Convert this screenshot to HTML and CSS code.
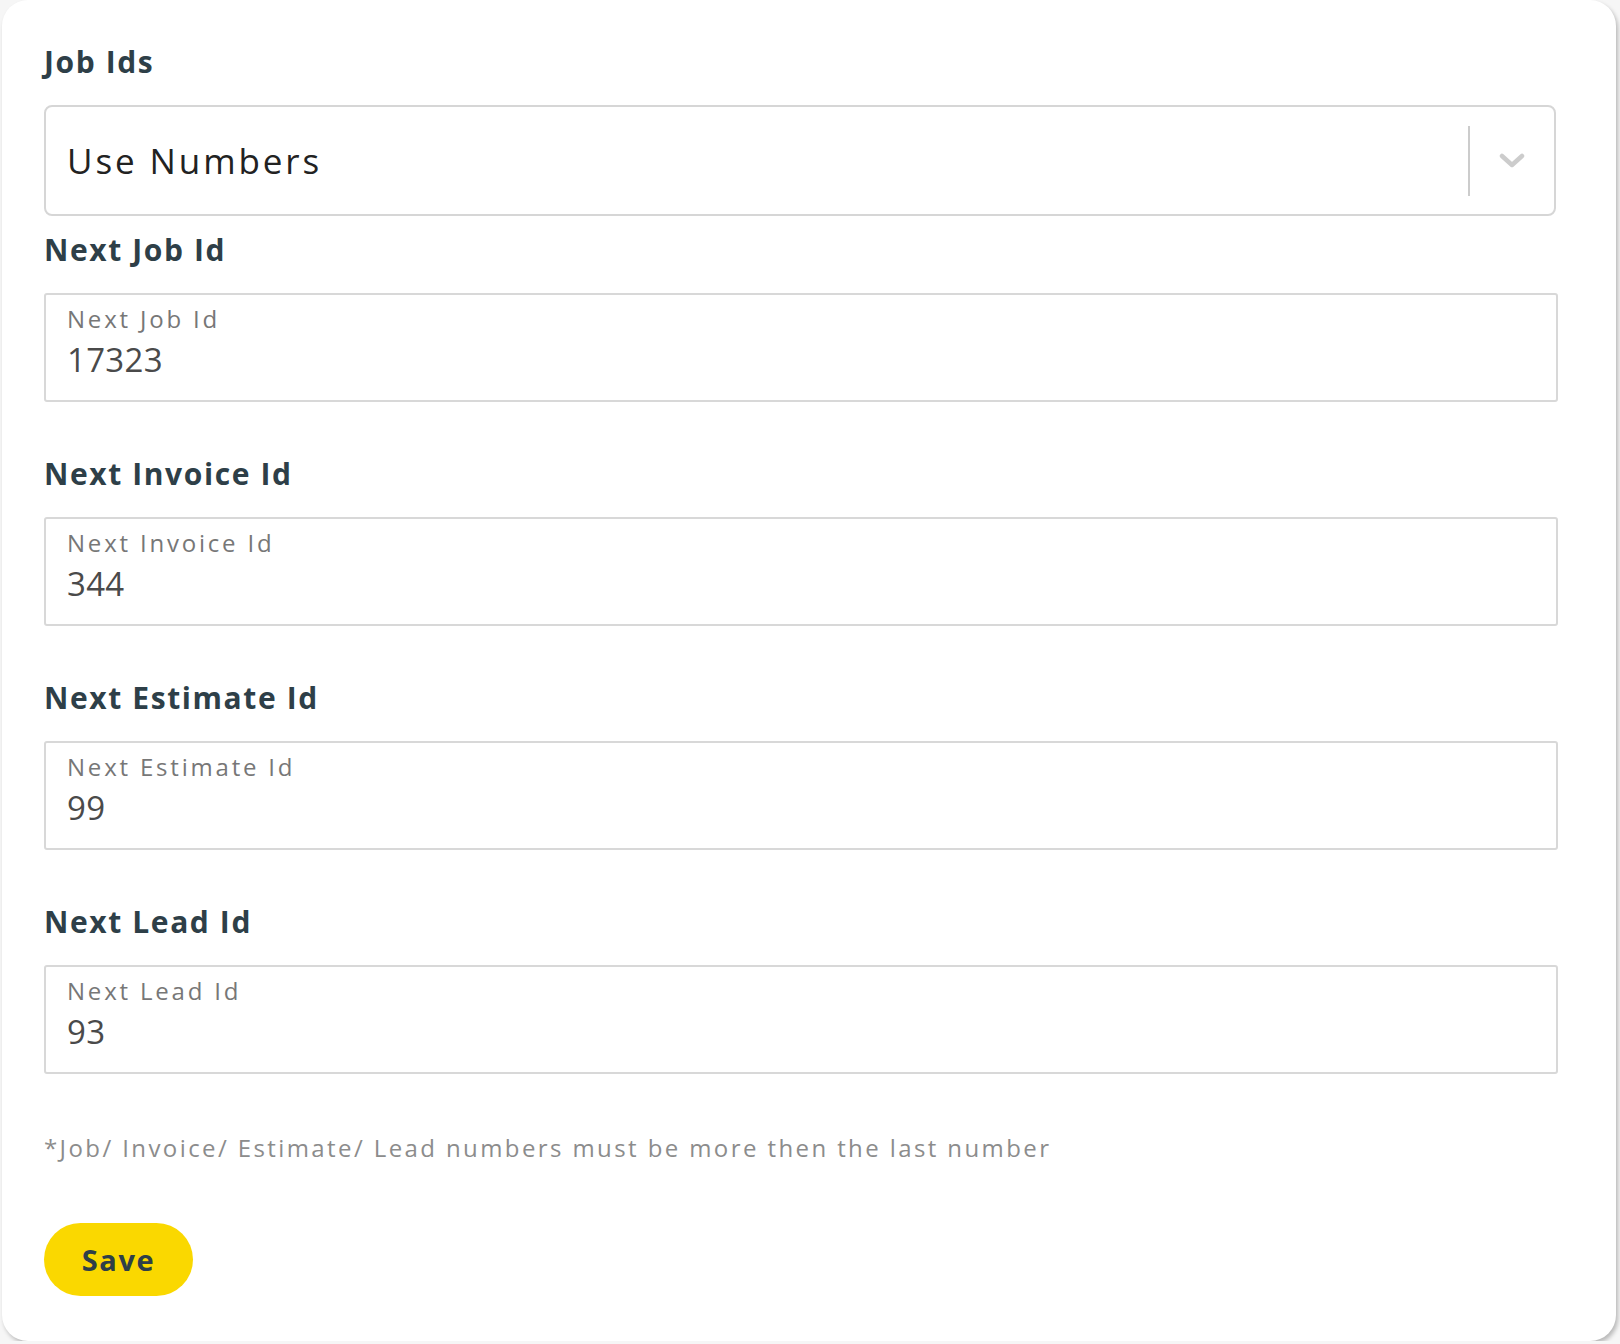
FILE: index.html
```html
<!DOCTYPE html>
<html lang="en">
<head>
  <meta charset="utf-8">
  <title>Job Ids</title>
  <link rel="stylesheet" href="styles.css">
</head>
<body>
<main class="card">
  <form class="settings">
    <h3 class="section-title">Job Ids</h3>
    <div class="select">
      <span class="select-value">Use Numbers</span>
      <span class="select-sep"></span>
      <span class="select-arrow">
        <svg width="26" height="16" viewBox="0 0 26 16"><path d="M3 3 L13 12 L23 3" fill="none" stroke="#cccccc" stroke-width="4.5" stroke-linecap="round" stroke-linejoin="round"/></svg>
      </span>
    </div>

    <h3 class="section-title">Next Job Id</h3>
    <div class="field">
      <label>Next Job Id</label>
      <div class="field-value">17323</div>
    </div>

    <h3 class="section-title">Next Invoice Id</h3>
    <div class="field">
      <label>Next Invoice Id</label>
      <div class="field-value">344</div>
    </div>

    <h3 class="section-title">Next Estimate Id</h3>
    <div class="field">
      <label>Next Estimate Id</label>
      <div class="field-value">99</div>
    </div>

    <h3 class="section-title">Next Lead Id</h3>
    <div class="field">
      <label>Next Lead Id</label>
      <div class="field-value">93</div>
    </div>

    <p class="note">*Job/ Invoice/ Estimate/ Lead numbers must be more then the last number</p>

    <button type="button" class="save">Save</button>
  </form>
</main>
</body>
</html>
```

FILE: styles.css
```css
html {
  box-sizing: border-box;
}

*, *:before, *:after {
  box-sizing: inherit;
}

body {
  margin: 0;
  background: #f6f6f6;
  font-family: 'Open Sans', 'Noto Sans', sans-serif;
}

.card {
  width: 1614px;
  height: 1341px;
  margin-left: 2px;
  background: #fff;
  border-radius: 26px;
  box-shadow: 2px 3px 4px rgba(0, 0, 0, 0.25);
  padding: 40px 58px 0 42px;
}

.settings {
  display: flex;
  flex-direction: column;
}

.section-title {
  margin: 0 0 21px 0;
  font-size: 30px;
  line-height: 44px;
  font-weight: 700;
  color: #2e3f48;
  letter-spacing: 1.6px;
}

.select {
  height: 111px;
  border: 2px solid #d6d6d6;
  border-radius: 8px;
  display: flex;
  align-items: center;
  padding-left: 21px;
  margin: 0 2px 12px 0;
}

.select-value {
  flex: 1;
  font-size: 35px;
  color: #222;
  letter-spacing: 2.9px;
}

.select-sep {
  width: 2px;
  height: 70px;
  background: #cccccc;
}

.select-arrow {
  width: 84px;
  display: flex;
  justify-content: center;
}

.field {
  height: 109px;
  border: 2px solid #d8d8d8;
  border-radius: 3px;
  padding: 8px 21px 0;
  margin-bottom: 50px;
}

.field label {
  display: block;
  font-size: 24px;
  line-height: 32px;
  color: #777;
  letter-spacing: 2.8px;
}

.field-value {
  font-size: 33px;
  line-height: 50px;
  color: #4a4a4a;
  letter-spacing: 0.3px;
}

.note {
  margin: 7px 0 59px 0;
  font-size: 24px;
  color: #8c8c8c;
  letter-spacing: 2.4px;
}

.save {
  align-self: flex-start;
  width: 149px;
  height: 73px;
  border: none;
  border-radius: 37px;
  background: #fad800;
  font-family: inherit;
  font-size: 29px;
  font-weight: 700;
  color: #2e3f48;
  letter-spacing: 1.6px;
}
```
